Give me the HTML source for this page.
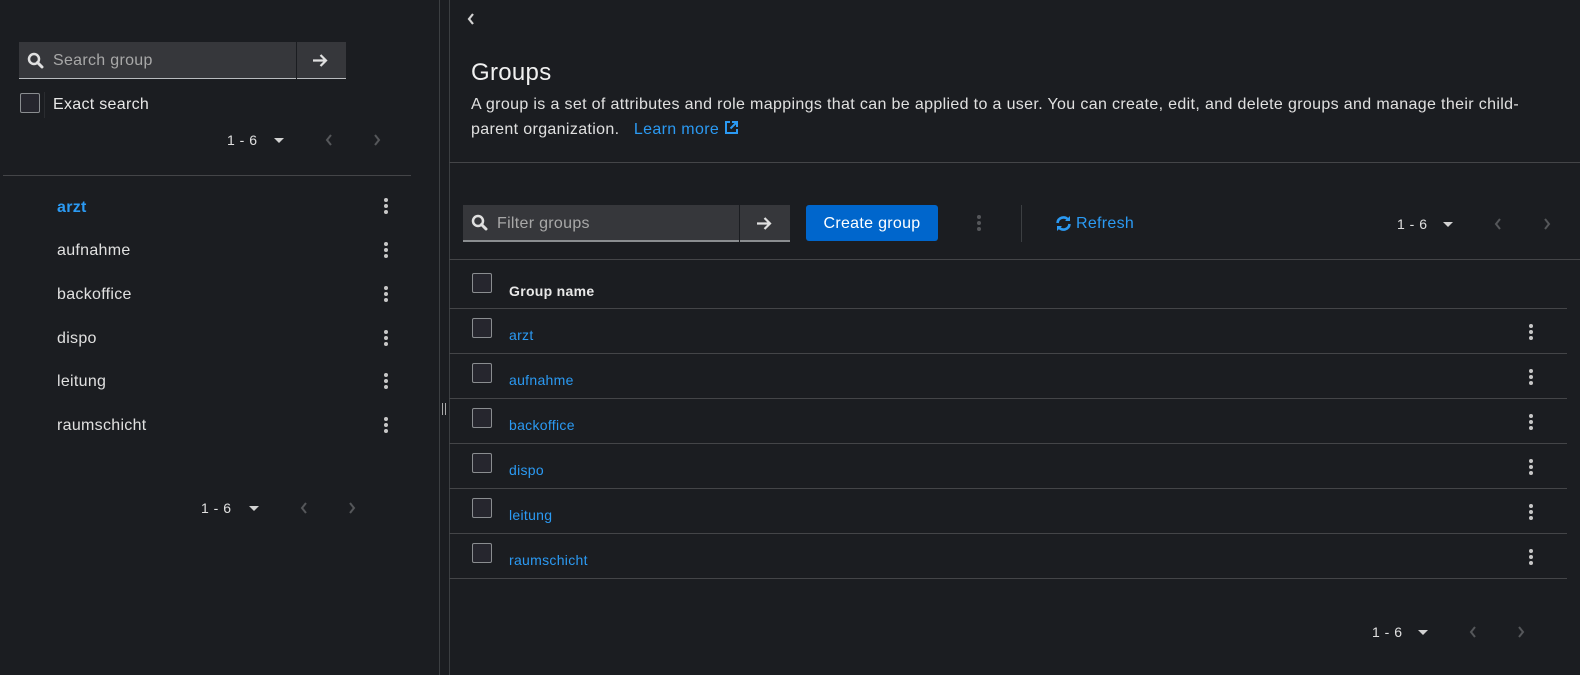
<!DOCTYPE html>
<html><head><style>
*{margin:0;padding:0;box-sizing:border-box}
body{width:1580px;height:675px;background:#1b1d21;font-family:"Liberation Sans",sans-serif;color:#e0e0e0;position:relative;overflow:hidden}
.a{position:absolute}
.vl{position:absolute;top:0;height:675px;width:1px;background:#3c3f42}
.hl{position:absolute;height:1px;background:#444548}
.cb{position:absolute;width:20px;height:20px;border:1px solid #8a8d90;border-radius:2px;background:#26262e}
.kb{position:absolute;width:4px}
.kb i{display:block;width:4px;height:4px;border-radius:50%;background:#c7c7c7;margin-bottom:2px}
.link{color:#2b9af3}
.pg{position:absolute;font-size:14px;color:#e0e0e0;letter-spacing:0.5px}
.caret{position:absolute;width:0;height:0;border-left:5px solid transparent;border-right:5px solid transparent;border-top:5px solid #d2d2d2}
.chev{position:absolute}
.t{letter-spacing:0.3px}
</style></head><body>
<!-- left panel -->
<div class="a" style="left:19px;top:42px;width:277px;height:37px;background:#36373b;border-bottom:1px solid #b8bbbe"></div>
<svg class="a" style="left:27px;top:52px" width="17" height="17" viewBox="0 0 17 17"><circle cx="7" cy="7" r="5" fill="none" stroke="#e0e0e0" stroke-width="2.5"/><path d="M10.5 10.5L15 15" stroke="#e0e0e0" stroke-width="3" stroke-linecap="round"/></svg>
<div class="a t" style="left:53px;top:52px;font-size:16px;color:#a8a8a8">Search group</div>
<div class="a" style="left:297px;top:42px;width:49px;height:37px;background:#36373b;border-bottom:1px solid #b8bbbe"></div>
<svg class="a" style="left:312px;top:53px" width="16" height="15" viewBox="0 0 16 15"><path d="M1 7.5H14M8.5 2l5.5 5.5-5.5 5.5" fill="none" stroke="#e0e0e0" stroke-width="2.2"/></svg>
<div class="cb" style="left:20px;top:93px"></div>
<div class="a" style="left:44px;top:92px;width:1px;height:26px;background:#2a2c30"></div>
<div class="a t" style="left:53px;top:96px;font-size:16px;color:#e8e8e8">Exact search</div>
<div class="pg" style="left:227px;top:132px">1 - 6</div>
<div class="caret" style="left:274px;top:138px"></div>
<svg class="chev" style="left:325px;top:134px" width="8" height="12" viewBox="0 0 8 12"><path d="M6 1L2 6l4 5" fill="none" stroke="#55575a" stroke-width="2"/></svg>
<svg class="chev" style="left:373px;top:134px" width="8" height="12" viewBox="0 0 8 12"><path d="M2 1l4 5-4 5" fill="none" stroke="#55575a" stroke-width="2"/></svg>
<div class="hl" style="left:3px;top:175px;width:408px"></div>
<div class="a link t" style="left:57px;top:199px;font-size:16px;font-weight:bold">arzt</div>
<div class="a t" style="left:57px;top:242px;font-size:16px">aufnahme</div>
<div class="a t" style="left:57px;top:286px;font-size:16px">backoffice</div>
<div class="a t" style="left:57px;top:330px;font-size:16px">dispo</div>
<div class="a t" style="left:57px;top:373px;font-size:16px">leitung</div>
<div class="a t" style="left:57px;top:417px;font-size:16px">raumschicht</div>
<div class="kb" style="left:384px;top:198px"><i></i><i></i><i></i></div>
<div class="kb" style="left:384px;top:242px"><i></i><i></i><i></i></div>
<div class="kb" style="left:384px;top:286px"><i></i><i></i><i></i></div>
<div class="kb" style="left:384px;top:330px"><i></i><i></i><i></i></div>
<div class="kb" style="left:384px;top:373px"><i></i><i></i><i></i></div>
<div class="kb" style="left:384px;top:417px"><i></i><i></i><i></i></div>
<div class="pg" style="left:201px;top:500px">1 - 6</div>
<div class="caret" style="left:249px;top:506px"></div>
<svg class="chev" style="left:300px;top:502px" width="8" height="12" viewBox="0 0 8 12"><path d="M6 1L2 6l4 5" fill="none" stroke="#55575a" stroke-width="2"/></svg>
<svg class="chev" style="left:348px;top:502px" width="8" height="12" viewBox="0 0 8 12"><path d="M2 1l4 5-4 5" fill="none" stroke="#55575a" stroke-width="2"/></svg>
<!-- splitter -->
<div class="vl" style="left:439px"></div>
<div class="vl" style="left:449px"></div>
<div class="a" style="left:442px;top:403px;width:1px;height:12px;background:#aaa"></div>
<div class="a" style="left:445px;top:403px;width:1px;height:12px;background:#aaa"></div>
<!-- right -->
<svg class="a" style="left:467px;top:13px" width="8" height="12" viewBox="0 0 8 12"><path d="M6 1L2 6l4 5" fill="none" stroke="#d2d2d2" stroke-width="2.2"/></svg>
<div class="a t" style="left:471px;top:59px;font-size:24px;color:#f0f0f0">Groups</div>
<div class="a" style="left:471px;top:92px;width:1050px;font-size:16px;line-height:25px;color:#e0e0e0;letter-spacing:0.35px">A group is a set of attributes and role mappings that can be applied to a user. You can create, edit, and delete groups and manage their child-parent organization. &nbsp;&nbsp;<span class="link">Learn more</span> <svg width="15" height="15" viewBox="0 0 15 15" style="vertical-align:-1px"><path d="M6 2H2v11h11V9M8 2h5v5M13 2L6.5 8.5" fill="none" stroke="#2b9af3" stroke-width="2"/></svg></div>
<div class="hl" style="left:449px;top:162px;width:1131px"></div>
<div class="a" style="left:463px;top:205px;width:276px;height:37px;background:#36373b;border-bottom:2px solid #8a8d90"></div>
<svg class="a" style="left:471px;top:214px" width="17" height="17" viewBox="0 0 17 17"><circle cx="7" cy="7" r="5" fill="none" stroke="#e0e0e0" stroke-width="2.5"/><path d="M10.5 10.5L15 15" stroke="#e0e0e0" stroke-width="3" stroke-linecap="round"/></svg>
<div class="a t" style="left:497px;top:215px;font-size:16px;color:#a8a8a8">Filter groups</div>
<div class="a" style="left:740px;top:205px;width:50px;height:37px;background:#36373b;border-bottom:2px solid #8a8d90"></div>
<svg class="a" style="left:756px;top:216px" width="16" height="15" viewBox="0 0 16 15"><path d="M1 7.5H14M8.5 2l5.5 5.5-5.5 5.5" fill="none" stroke="#e0e0e0" stroke-width="2.2"/></svg>
<div class="a t" style="left:806px;top:205px;width:132px;height:36px;background:#0066cc;border-radius:3px;color:#fff;font-size:16px;text-align:center;line-height:38px">Create group</div>
<div class="kb" style="left:977px;top:215px"><i style="background:#55575a"></i><i style="background:#55575a"></i><i style="background:#55575a"></i></div>
<div class="a" style="left:1021px;top:205px;width:1px;height:37px;background:#3c3f42"></div>
<svg class="a" style="left:1055px;top:215px" width="17" height="17" viewBox="0 0 17 17"><path d="M2.5 8A6 6 0 0 1 13 4.5M14.5 9A6 6 0 0 1 4 12.5" fill="none" stroke="#2b9af3" stroke-width="2.6"/><path d="M15 1v5h-5zM2 16v-5h5z" fill="#2b9af3"/></svg>
<div class="a link t" style="left:1076px;top:215px;font-size:16px">Refresh</div>
<div class="pg" style="left:1397px;top:216px">1 - 6</div>
<div class="caret" style="left:1443px;top:222px"></div>
<svg class="chev" style="left:1494px;top:218px" width="8" height="12" viewBox="0 0 8 12"><path d="M6 1L2 6l4 5" fill="none" stroke="#55575a" stroke-width="2"/></svg>
<svg class="chev" style="left:1543px;top:218px" width="8" height="12" viewBox="0 0 8 12"><path d="M2 1l4 5-4 5" fill="none" stroke="#55575a" stroke-width="2"/></svg>
<div class="hl" style="left:449px;top:259px;width:1131px"></div>
<div class="cb" style="left:472px;top:273px"></div>
<div class="a t" style="left:509px;top:283px;font-size:14px;font-weight:bold;color:#e8e8e8">Group name</div>
<div class="hl" style="left:449px;top:308px;width:1118px"></div>
<div class="hl" style="left:449px;top:353px;width:1118px"></div>
<div class="hl" style="left:449px;top:398px;width:1118px"></div>
<div class="hl" style="left:449px;top:443px;width:1118px"></div>
<div class="hl" style="left:449px;top:488px;width:1118px"></div>
<div class="hl" style="left:449px;top:533px;width:1118px"></div>
<div class="hl" style="left:449px;top:578px;width:1118px"></div>
<div class="cb" style="left:472px;top:318px"></div><div class="a link t" style="left:509px;top:327px;font-size:14px">arzt</div><div class="kb" style="left:1529px;top:324px"><i></i><i></i><i></i></div>
<div class="cb" style="left:472px;top:363px"></div><div class="a link t" style="left:509px;top:372px;font-size:14px">aufnahme</div><div class="kb" style="left:1529px;top:369px"><i></i><i></i><i></i></div>
<div class="cb" style="left:472px;top:408px"></div><div class="a link t" style="left:509px;top:417px;font-size:14px">backoffice</div><div class="kb" style="left:1529px;top:414px"><i></i><i></i><i></i></div>
<div class="cb" style="left:472px;top:453px"></div><div class="a link t" style="left:509px;top:462px;font-size:14px">dispo</div><div class="kb" style="left:1529px;top:459px"><i></i><i></i><i></i></div>
<div class="cb" style="left:472px;top:498px"></div><div class="a link t" style="left:509px;top:507px;font-size:14px">leitung</div><div class="kb" style="left:1529px;top:504px"><i></i><i></i><i></i></div>
<div class="cb" style="left:472px;top:543px"></div><div class="a link t" style="left:509px;top:552px;font-size:14px">raumschicht</div><div class="kb" style="left:1529px;top:549px"><i></i><i></i><i></i></div>
<div class="pg" style="left:1372px;top:624px">1 - 6</div>
<div class="caret" style="left:1418px;top:630px"></div>
<svg class="chev" style="left:1469px;top:626px" width="8" height="12" viewBox="0 0 8 12"><path d="M6 1L2 6l4 5" fill="none" stroke="#55575a" stroke-width="2"/></svg>
<svg class="chev" style="left:1517px;top:626px" width="8" height="12" viewBox="0 0 8 12"><path d="M2 1l4 5-4 5" fill="none" stroke="#55575a" stroke-width="2"/></svg>
</body></html>
